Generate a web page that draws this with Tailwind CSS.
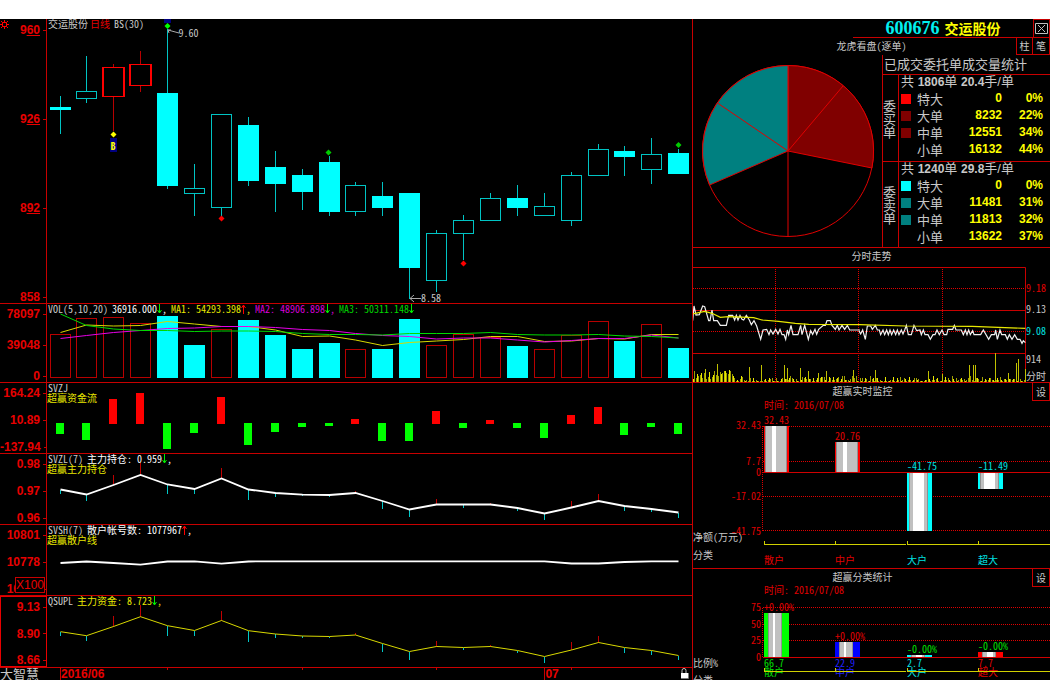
<!DOCTYPE html>
<html lang="zh-CN">
<head>
<meta charset="utf-8">
<title>600676 交运股份</title>
<script src="https://cdn.jsdelivr.net/npm/@tailwindcss/browser@4"></script>
</head>
<body class="bg-white pt-[19px] font-['Noto_Sans_CJK_SC',sans-serif] text-[10px] leading-[10px] text-[#c8c8c8] [font-feature-settings:'hwid'_1]">
<main class="grid grid-cols-[minmax(0,692fr)_minmax(0,358fr)] overflow-hidden bg-black">

<div class="flex flex-col">
  <section class="flex h-[285px] border-b border-[#c80000]">
    <div class="relative flex w-[47px] shrink-0 flex-col justify-between border-r border-[#c80000] pt-[5px] font-['Liberation_Sans'] text-[12px] leading-3 font-bold text-[#e80000]">
      <button aria-label="设置" class="absolute top-[1px] left-0"><svg class="size-[9px]" viewBox="0 0 9 9" fill="none" stroke="#f00"><path d="M2.500 2.500h4v4h-4zM4.500 0v2M4.500 7v2M0 4.500h2M7 4.500h2M1 1l1.500 1.500M6.500 6.500L8 8M8 1L6.500 2.500M1 8l1.500-1.500"/></svg></button>
      <div class="flex items-center justify-end gap-[3px]"><span>9<u>60</u></span><i class="h-px w-[3px] bg-[#c80000]"></i></div>
      <div class="flex items-center justify-end gap-[3px]"><span>9<u>26</u></span><i class="h-px w-[3px] bg-[#c80000]"></i></div>
      <div class="flex items-center justify-end gap-[3px]"><span>8<u>92</u></span><i class="h-px w-[3px] bg-[#c80000]"></i></div>
      <div class="flex items-center justify-end gap-[3px]"><span>858</span><i class="h-px w-[3px] bg-[#c80000]"></i></div>
    </div>
    <div class="relative min-w-0 flex-1">
      <svg id="price" class="h-[284px] w-full" viewBox="47 19 645 284" preserveAspectRatio="none"></svg>
      <div class="absolute top-0 left-px flex gap-[2px]"><span>交运股份</span><span class="text-[#e80000]">日线</span><span class="pl-[2px]">BS(30)</span></div>
      <span class="absolute top-[9px] left-[20.4%]">9.60</span>
      <span class="absolute top-[274px] left-[58%]">8.58</span>
      <span class="absolute top-[119px] left-[9.7%] h-[14px] bg-[#000080] px-px pt-[3px] font-bold text-[#ffff00]">B</span>
    </div>
  </section>

  <section class="flex h-[79px] border-b border-[#c80000]">
    <div class="flex w-[47px] shrink-0 flex-col justify-between border-r border-[#c80000] pt-1 font-['Liberation_Sans'] text-[12px] leading-3 font-bold text-[#e80000]">
      <div class="flex items-center justify-end gap-[3px]"><span>78097</span><i class="h-px w-[3px] bg-[#c80000]"></i></div>
      <div class="flex items-center justify-end gap-[3px]"><span>39048</span><i class="h-px w-[3px] bg-[#c80000]"></i></div>
      <div class="flex items-center justify-end gap-[3px]"><span>0</span><i class="h-px w-[3px] bg-[#c80000]"></i></div>
    </div>
    <div class="relative min-w-0 flex-1">
      <svg id="volume" class="h-[78px] w-full" viewBox="47 304 645 78" preserveAspectRatio="none"></svg>
      <div class="absolute top-0 left-px flex gap-1 whitespace-nowrap">
        <span>VOL(5,10,20)</span>
        <span class="flex text-white">36916.000<svg class="h-[10px] w-[5px]" viewBox="0 0 5 10" stroke="#0e0" fill="none"><path d="M2.5 0v9M.5 6l2 3 2-3"/></svg>,</span>
        <span class="flex text-[#e8e800]">MA1: 54293.398<svg class="h-[10px] w-[5px]" viewBox="0 0 5 10" stroke="#f00" fill="none"><path d="M2.5 10V1M.5 4l2-3 2 3"/></svg>,</span>
        <span class="flex text-[#d800d8]">MA2: 48906.898<svg class="h-[10px] w-[5px]" viewBox="0 0 5 10" stroke="#0e0" fill="none"><path d="M2.5 0v9M.5 6l2 3 2-3"/></svg>,</span>
        <span class="flex text-[#00d800]">MA3: 50311.148<svg class="h-[10px] w-[5px]" viewBox="0 0 5 10" stroke="#0e0" fill="none"><path d="M2.5 0v9M.5 6l2 3 2-3"/></svg></span>
      </div>
    </div>
  </section>

  <section class="flex h-[71px] border-b border-[#c80000]">
    <div class="flex w-[47px] shrink-0 flex-col justify-between border-r border-[#c80000] pt-1 font-['Liberation_Sans'] text-[12px] leading-3 font-bold text-[#e80000]">
      <div class="flex items-center justify-end gap-[3px]"><span>164.24</span><i class="h-px w-[3px] bg-[#c80000]"></i></div>
      <div class="flex items-center justify-end gap-[3px]"><span>10.89</span><i class="h-px w-[3px] bg-[#c80000]"></i></div>
      <div class="flex items-center justify-end gap-[3px]"><span>-137.94</span><i class="h-px w-[3px] bg-[#c80000]"></i></div>
    </div>
    <div class="relative min-w-0 flex-1">
      <svg id="flow" class="h-[70px] w-full" viewBox="47 383 645 70" preserveAspectRatio="none"></svg>
      <div class="absolute top-0 left-0"><p class="pl-px">SVZJ</p><p class="text-[#e8e800]">超赢资金流</p></div>
    </div>
  </section>

  <section class="flex h-[71px] border-b border-[#c80000]">
    <div class="flex w-[47px] shrink-0 flex-col justify-between border-r border-[#c80000] pt-1 font-['Liberation_Sans'] text-[12px] leading-3 font-bold text-[#e80000]">
      <div class="flex items-center justify-end gap-[3px]"><span>0.98</span><i class="h-px w-[3px] bg-[#c80000]"></i></div>
      <div class="flex items-center justify-end gap-[3px]"><span>0.97</span><i class="h-px w-[3px] bg-[#c80000]"></i></div>
      <div class="flex items-center justify-end gap-[3px]"><span>0.96</span><i class="h-px w-[3px] bg-[#c80000]"></i></div>
    </div>
    <div class="relative min-w-0 flex-1">
      <svg id="holding" class="h-[70px] w-full" viewBox="47 454 645 70" preserveAspectRatio="none"></svg>
      <div class="absolute top-0 left-0"><p class="flex gap-1 pl-px">SVZL(7) <span class="flex text-white">主力持仓: 0.959<svg class="h-[10px] w-[5px]" viewBox="0 0 5 10" stroke="#0e0" fill="none"><path d="M2.5 0v9M.5 6l2 3 2-3"/></svg>,</span></p><p class="text-[#e8e800]">超赢主力持仓</p></div>
    </div>
  </section>

  <section class="flex h-[71px] border-b border-[#c80000]">
    <div class="relative flex w-[47px] shrink-0 flex-col justify-between border-r border-[#c80000] pt-1 font-['Liberation_Sans'] text-[12px] leading-3 font-bold text-[#e80000]">
      <div class="flex items-center justify-end gap-[3px]"><span>10801</span><i class="h-px w-[3px] bg-[#c80000]"></i></div>
      <div class="flex items-center justify-end gap-[3px]"><span>10778</span><i class="h-px w-[3px] bg-[#c80000]"></i></div>
      <div class="flex items-center justify-end gap-[3px]"><span>10755</span><i class="h-px w-[3px] bg-[#c80000]"></i></div>
      <span class="absolute right-px bottom-[2px] border border-[#c80000] bg-black py-px font-normal">X100</span>
    </div>
    <div class="relative min-w-0 flex-1">
      <svg id="retail" class="h-[70px] w-full" viewBox="47 525 645 70" preserveAspectRatio="none"></svg>
      <div class="absolute top-0 left-0"><p class="flex gap-1 pl-px">SVSH(7) <span class="flex text-white">散户帐号数: 1077967<svg class="h-[10px] w-[5px]" viewBox="0 0 5 10" stroke="#f00" fill="none"><path d="M2.5 10V1M.5 4l2-3 2 3"/></svg>,</span></p><p class="text-[#e8e800]">超赢散户线</p></div>
    </div>
  </section>

  <section class="flex h-[72px] border-b border-[#c80000]">
    <div class="flex w-[47px] shrink-0 flex-col justify-between border border-[#e80000] pt-1 font-['Liberation_Sans'] text-[12px] leading-3 font-bold text-[#e80000]">
      <div class="flex items-center justify-end gap-[3px]"><span>9.13</span><i class="h-px w-[3px] bg-[#c80000]"></i></div>
      <div class="flex items-center justify-end gap-[3px]"><span>8.90</span><i class="h-px w-[3px] bg-[#c80000]"></i></div>
      <div class="flex items-center justify-end gap-[3px]"><span>8.66</span><i class="h-px w-[3px] bg-[#c80000]"></i></div>
    </div>
    <div class="relative min-w-0 flex-1">
      <svg id="funds" class="h-[71px] w-full" viewBox="47 596 645 71" preserveAspectRatio="none"></svg>
      <p class="absolute top-0 left-px flex gap-1">QSUPL <span class="flex text-[#e8e800]">主力资金: 8.723<svg class="h-[10px] w-[5px]" viewBox="0 0 5 10" stroke="#0e0" fill="none"><path d="M2.5 0v9M.5 6l2 3 2-3"/></svg>,</span></p>
    </div>
  </section>

  <footer class="flex h-[12px] leading-3">
    <span class="w-[60px] shrink-0 text-[13px]">大智慧</span>
    <div class="relative flex-1 font-['Liberation_Sans'] text-[12px] font-bold text-[#e80000]">
      <svg class="h-3 w-full" viewBox="60 668 632 12" preserveAspectRatio="none" stroke="#c80000" shape-rendering="crispEdges"><path d="M60.5 668v12M544.5 668v12M86.5 668v2M167.5 668v2M302.5 668v2M436.5 668v2M571.5 668v2"/></svg>
      <span class="absolute top-0 left-px">2016/06</span><span class="absolute top-0 left-[76.8%]">07</span>
      <svg class="absolute top-0 right-[3px] h-[11px] w-[9px]" viewBox="0 0 9 11"><path d="M2 5V2.500Q2 .5 4 .5T6 2.500V5" fill="none" stroke="#c0c0c0"/><path d="M1 5h7v5H1z" fill="#fff"/><path d="M8.500 5v5.500H1" fill="none" stroke="#777"/></svg>
    </div>
  </footer>
</div>

<div class="flex flex-col border-l border-[#c80000]">
  <section class="border-b border-[#c80000]">
    <header class="flex h-[19px]">
      <div class="w-[160px] shrink-0"></div>
      <h1 class="flex flex-1 items-center justify-center gap-[5px] border-b border-[#c80000] text-[14px] leading-[18px] font-bold text-[#ffff00]"><span class="font-['Liberation_Serif'] text-[18px] text-[#00f0f0]">600676</span>交运股份</h1>
      <button aria-label="关闭" class="flex w-[17px] items-center justify-center border border-[#c80000]"><svg class="size-[13px]" viewBox="0 0 13 13" fill="none" stroke="#c0c0c0"><path d="M.5 1.500h12v10H.5zM3 3l7 7M10 3l-7 7"/></svg></button>
    </header>
    <div class="flex h-[17px]">
      <div class="w-[34px]"></div>
      <h2 class="flex-1 pt-[3px] text-center">龙虎看盘(逐单)</h2>
      <button class="w-[17px] border border-t-0 border-[#c80000]">柱</button><button class="w-[17px] border border-t-0 border-l-0 border-[#c80000]">笔</button>
    </div>
    <div class="flex h-[192px]">
      <svg class="h-[192px] w-[189px] shrink-0" viewBox="693 55 189 192" stroke="#e00000">
        <circle cx="788" cy="151" r="85.500" fill="#000"/>
        <path d="M788 151V65.500A85.500 85.500 0 0 1 871.900 168Z" fill="#800000"/>
        <path d="M788 151L709.600 185A85.500 85.500 0 0 1 788 65.500Z" fill="#008080"/>
        <path d="M788 151L843 86M788 151L717.500 103M788 151V236.500" fill="none"/>
      </svg>
      <div class="flex-1 border-l border-[#c80000] text-[13px]">
        <h3 class="h-[19px] pl-px leading-[17px] whitespace-nowrap">已成交委托单成交量统计</h3>
        <div class="flex h-[87px] border-t border-[#c80000]">
          <div class="flex w-[16px] flex-col justify-center border-r border-[#c80000] leading-[13px]"><span>委</span><span>买</span><span>单</span></div>
          <div class="flex-1">
          <table class="w-full [&_td]:h-[17px] [&_td]:p-0 [&_td]:align-middle">
            <caption class="h-[15px] pl-[2px] text-left font-['Liberation_Sans','Noto_Sans_CJK_SC'] leading-[14px] whitespace-nowrap">共 <b class="text-[12px]">1806</b>单 <b class="text-[12px]">20.4</b>手/单</caption>
            <tbody class="leading-[15px]">
            <tr><td class="w-[18px]"><i class="ml-[2px] block size-[10px] bg-[#ff0000]"></i></td><td class="w-[28px]">特大</td><td class="text-right font-['Liberation_Sans'] text-[12px] font-bold text-[#ffff00]">0</td><td class="w-[41px] text-right font-['Liberation_Sans'] text-[12px] font-bold text-[#ffff00]">0%</td><td class="w-[7px]"></td></tr>
            <tr><td><i class="ml-[2px] block size-[10px] bg-[#800000]"></i></td><td>大单</td><td class="text-right font-['Liberation_Sans'] text-[12px] font-bold text-[#ffff00]">8232</td><td class="text-right font-['Liberation_Sans'] text-[12px] font-bold text-[#ffff00]">22%</td><td></td></tr>
            <tr><td><i class="ml-[2px] block size-[10px] bg-[#800000]"></i></td><td>中单</td><td class="text-right font-['Liberation_Sans'] text-[12px] font-bold text-[#ffff00]">12551</td><td class="text-right font-['Liberation_Sans'] text-[12px] font-bold text-[#ffff00]">34%</td><td></td></tr>
            <tr><td></td><td>小单</td><td class="text-right font-['Liberation_Sans'] text-[12px] font-bold text-[#ffff00]">16132</td><td class="text-right font-['Liberation_Sans'] text-[12px] font-bold text-[#ffff00]">44%</td><td></td></tr>
            </tbody>
          </table>
          </div>
        </div>
        <div class="flex h-[86px] border-t border-[#c80000]">
          <div class="flex w-[16px] flex-col justify-center border-r border-[#c80000] leading-[13px]"><span>委</span><span>卖</span><span>单</span></div>
          <div class="flex-1">
          <table class="w-full [&_td]:h-[17px] [&_td]:p-0 [&_td]:align-middle">
            <caption class="h-[15px] pl-[2px] text-left font-['Liberation_Sans','Noto_Sans_CJK_SC'] leading-[14px] whitespace-nowrap">共 <b class="text-[12px]">1240</b>单 <b class="text-[12px]">29.8</b>手/单</caption>
            <tbody class="leading-[15px]">
            <tr><td class="w-[18px]"><i class="ml-[2px] block size-[10px] bg-[#00ffff]"></i></td><td class="w-[28px]">特大</td><td class="text-right font-['Liberation_Sans'] text-[12px] font-bold text-[#ffff00]">0</td><td class="w-[41px] text-right font-['Liberation_Sans'] text-[12px] font-bold text-[#ffff00]">0%</td><td class="w-[7px]"></td></tr>
            <tr><td><i class="ml-[2px] block size-[10px] bg-[#008080]"></i></td><td>大单</td><td class="text-right font-['Liberation_Sans'] text-[12px] font-bold text-[#ffff00]">11481</td><td class="text-right font-['Liberation_Sans'] text-[12px] font-bold text-[#ffff00]">31%</td><td></td></tr>
            <tr><td><i class="ml-[2px] block size-[10px] bg-[#008080]"></i></td><td>中单</td><td class="text-right font-['Liberation_Sans'] text-[12px] font-bold text-[#ffff00]">11813</td><td class="text-right font-['Liberation_Sans'] text-[12px] font-bold text-[#ffff00]">32%</td><td></td></tr>
            <tr><td></td><td>小单</td><td class="text-right font-['Liberation_Sans'] text-[12px] font-bold text-[#ffff00]">13622</td><td class="text-right font-['Liberation_Sans'] text-[12px] font-bold text-[#ffff00]">37%</td><td></td></tr>
            </tbody>
          </table>
          </div>
        </div>
      </div>
    </div>
  </section>

  <section class="h-[135px] border-b border-[#c80000]">
    <h2 class="h-[19px] pt-[3px] text-center">分时走势</h2>
    <div class="flex">
      <svg id="intraday" class="h-[115px] min-w-0 flex-1" viewBox="693 267 333 115" preserveAspectRatio="none"></svg>
      <div class="w-6 pt-4 whitespace-nowrap"><p class="text-[#e00000]">9.18</p><p class="pt-[11px]">9.13</p><p class="pt-[12px] text-[#00e0e0]">9.08</p><p class="pt-[18px]">914</p><p class="pt-[7px]">分时</p></div>
    </div>
  </section>

  <section class="h-[186px] border-b border-[#c80000]">
    <header class="flex h-[18px]"><h2 class="flex-1 pt-[3px] text-center">超赢实时监控</h2><button class="w-[18px] border border-t-0 border-[#c80000]">设</button></header>
    <svg id="monitor" class="h-[167px] w-full overflow-visible" viewBox="693 401 357 167" preserveAspectRatio="xMinYMin meet"></svg>
  </section>

  <section>
    <header class="flex h-[18px]"><h2 class="flex-1 pt-[3px] text-center">超赢分类统计</h2><button class="w-[18px] border border-t-0 border-[#c80000]">设</button></header>
    <svg id="classes" class="h-[93px] w-full overflow-visible" viewBox="693 587 357 93" preserveAspectRatio="xMinYMin meet"></svg>
  </section>
</div>
</main>

<script>
const put = (id, s) => { document.getElementById(id).innerHTML = s; };
const cx = i => Math.round(59.5 + 26.9 * i);
const rect = (x, y, w, h, f) => `<rect x="${x}" y="${y}" width="${w}" height="${h}" fill="${f}" shape-rendering="crispEdges"/>`;
const box = (x, y, w, h, c, sw = 1) => `<rect x="${x + .5}" y="${y + .5}" width="${w - 1}" height="${h - 1}" fill="none" stroke="${c}" stroke-width="${sw}"/>`;
const line = (p, c, w = 1) => `<polyline points="${p}" fill="none" stroke="${c}" stroke-width="${w}"/>`;
const series = (ys, c, w) => line(ys.map((y, i) => `${cx(i) + .5},${y}`).join(' '), c, w);
const diamond = (x, y, c) => `<path d="M${x - 3} ${y}L${x} ${y - 3}L${x + 3} ${y}L${x} ${y + 3}Z" fill="${c}"/>`;
const CY = '#00ffff', HC = '#00c4c4', RD = '#ff0000', DR = '#b80000';

// high, body top, body bottom, low, kind (f: filled, h: hollow, r: red)
const candles = [[96,107,110,134,'f'],[56,91,99,103,'h'],[64,67,97,131,'r'],[51,64,86,92,'r'],[29,93,186,189,'f'],[164,188,194,216,'h'],[114,114,208,216,'h'],[117,125,181,186,'f'],[151,167,184,212,'f'],[169,175,192,210,'f'],[156,162,212,216,'f'],[182,185,212,216,'h'],[182,196,208,216,'f'],[193,193,268,299,'f'],[230,233,281,292,'h'],[215,220,234,260,'h'],[193,198,221,221,'h'],[185,198,208,216,'f'],[193,206,216,216,'h'],[172,175,221,226,'h'],[144,149,176,176,'h'],[146,151,157,176,'f'],[138,154,170,184,'h'],[149,153,174,174,'f']];
put('price', candles.map(([h, t, b, l, k], i) => {
  const x = cx(i), c = k === 'r' ? RD : HC, w = k === 'r' ? DR : HC;
  let s = rect(x, h, 1, t - h, w) + rect(x, b, 1, l - b, w);
  if (k === 'f') return s + rect(x - 10, t, 21, b - t, CY);
  s += box(x - (k === 'r' ? 11 : 10), t, k === 'r' ? 23 : 21, b - t, c);
  if (k === 'r') s += rect(x - 11, t, 2, b - t, c) + rect(x + 10, t, 2, b - t, c);
  return s;
}).join('') + diamond(113.5, 134.5, '#ff0') + diamond(221.5, 218.5, RD) + diamond(463.5, 263.5, RD) + diamond(328.5, 152.5, '#0c0') + diamond(678.5, 145, '#0c0') +
  rect(164, 19, 7, 4, '#000080') + diamond(167.5, 26, '#0f0') + line('171,30 168,30 169,33', '#aaa') + line('168,30 179,33', '#aaa') + line('414,295 410,298.5 414,302', '#aaa') + line('410,298.5 421,298.5', '#aaa'));

const vol = [[334,0],[318,0],[317,0],[323,0],[316,1],[345,1],[329,0],[320,1],[335,1],[349,1],[343,1],[349,0],[349,1],[319,1],[345,0],[334,0],[337,0],[346,1],[349,0],[335,0],[321,0],[341,1],[324,0],[348,1]];
put('volume', vol.map(([t, f], i) => f ? rect(cx(i) - 10, t, 21, 378 - t, CY) : box(cx(i) - 10, t, 21, 378 - t, DR)).join('') +
  series([332.5,325,326,325.5,321.5,324,326.5,326.5,330,336.5,336,340,345.5,342.5,341,339.5,336.5,336.5,341.5,341,338.5,339,334.5,334.5], '#d8d800') +
  series([338.5,335.5,332.5,330.5,328.5,328,326.5,326.5,327.5,329.5,330.5,333.5,335.5,336.5,339,338,338,340,342,340.5,338.5,338.5,335,338], '#e800e8') +
  series([314,325.5,329,330.5,330.5,331.5,331,331,331.5,333.5,334.5,334.5,335,333.5,333.5,333.5,332.5,334.5,335,335,334.5,336,336.5,338], '#00d800'));

put('flow', [434,440,399,393,449,433,397,445,432,427,426,419,441,441,411,428,420,428,438,415,407,435,427,434].map((y, i) => y > 423 ? rect(cx(i) - 4, 423, 8, y - 423, '#0f0') : rect(cx(i) - 4, y, 8, (i === 11 || i === 16 ? 424 : 424) - y, RD)).join(''));

const ticks = (ys, ends) => ys.map((y, i) => rect(cx(i), Math.min(y, ends[i]), 1, Math.abs(ends[i] - y), ends[i] > y ? '#00c8c8' : '#c00000')).join('');
const hold = [489.5,494.5,485,475,484.5,489,478.5,489.5,493,494.7,495,493,501,509.5,504.5,504.5,504.5,508,513.5,507.5,501,506,509,512.5];
put('holding', ticks(hold, [494,501,475,463,494,494,468,500,497,496,496.5,491,509,517,499,508,503,511,520,501,494,511,512,518]) + series(hold, '#fff', 1.8));
put('retail', series([563,561.5,563,564.7,561.5,561.3,563.7,561.5,561.3,561.3,561.3,561.3,561.3,561.3,561.3,561.3,561.3,561.3,561.3,563.5,563.5,562,561.3,561.3], '#fff', 1.8));
const funds = [631.7,635.7,626.5,616.7,625.7,630.5,620.5,630.7,634,636,636.5,635,643.5,651.5,646.5,647.5,646.5,650.5,656.5,650,642.5,647.5,650.5,655.5];
put('funds', ticks(funds, [636,641,616,605,636,636,611,642,638,638,638,633,652,660,640.5,650,645,653,663,642,635.5,653,655,660]) + series(funds, '#d8d800'));

// intraday prices: three units to a pixel, relative to each half's origin
const px = (a, ox, oy) => a.map(([x, y]) => `${ox + x / 3},${oy + y / 3}`).join(' ');
const left = [[2,62],[6,18],[12,45],[22,44],[32,18],[38,20],[50,62],[54,62],[60,30],[65,62],[76,62],[85,76],[103,76],[110,46],[122,46],[128,60],[133,46],[138,60],[144,46],[150,58],[155,60],[163,46],[172,60],[178,74],[186,62],[194,78],[206,118],[213,90],[224,88],[231,104],[236,90],[243,102],[251,88],[258,102],[264,88],[270,104],[276,104],[281,118],[286,90],[290,104],[297,76],[303,104],[318,104],[326,76],[330,104],[338,76],[349,118],[356,92],[362,103],[369,88],[374,103],[380,88],[394,76],[400,76],[405,62],[415,62],[420,76],[430,88],[436,76],[441,90],[450,76],[458,88],[466,76],[473,90],[504,90]];
const right = [[3,92],[8,102],[14,90],[22,118],[28,78],[38,78],[43,88],[52,76],[58,90],[64,90],[68,104],[75,90],[80,104],[86,90],[91,104],[96,90],[101,104],[107,90],[113,104],[118,90],[123,104],[130,90],[135,102],[140,90],[145,76],[151,104],[160,104],[168,76],[176,92],[186,90],[190,104],[196,90],[201,104],[210,104],[217,118],[225,104],[231,104],[237,90],[244,104],[252,90],[258,104],[266,104],[270,88],[284,88],[289,76],[294,90],[310,90],[316,104],[322,90],[327,104],[332,90],[337,104],[344,92],[348,104],[368,104],[376,90],[392,118],[400,104],[410,104],[413,90],[418,118],[426,90],[431,104],[442,104],[448,118],[454,104],[462,118],[470,104],[478,118],[486,118],[492,130],[496,122],[502,128]];
const avg = [[2,42],[38,34],[60,40],[85,52],[110,50],[185,53],[210,60],[260,64],[310,70],[350,73],[504,74],[640,78],[840,79],[1000,85]];
let bars = '';
for (let k = 0; k < 250; k++) {
  const r = Math.abs(Math.sin(k * 12.9898) * 43758.5453) % 1;
  const h = Math.round(k < 30 ? 3 + r * 9 : 1 + r * r * 5);
  bars += rect(693 + Math.round(k * 1.333), 382 - h, 1, h, k % 3 ? '#a0a000' : '#e8e800');
}
[[45,38],[82,55],[103,33],[178,45],[213,50],[283,52],[292,42],[330,42],[355,32],[385,28],[409,34],[490,37],[556,37],[714,32],[757,25],[838,50],[851,50],[856,50],[917,86],[955,28],[979,57],[985,68],[1005,38]].forEach(([x, h]) => { bars += rect(Math.round(689.5 + x / 3), 382 - Math.round(h / 3), 1, Math.round(h / 3), '#c0c000'); });
put('intraday', '<path d="M693 288.500H1025M693 331.500H1025M775.500 267V382M858.500 267V382M942.500 267V382" stroke="#e00000" stroke-dasharray="1 1" shape-rendering="crispEdges" fill="none"/><path d="M693 267.500H1025.500V382M693 310.500H1025M693 353.500H1025" stroke="#c80000" fill="none"/>' + bars + line(px(left, 692, 300), '#f0f0f0', 1.2) + line(px(right, 858, 300), '#f0f0f0', 1.2) + line(px(avg, 692, 300), '#e8e800', 1.2));

const text = (x, y, s, c, a = 'start') => `<text x="${x}" y="${y}" fill="${c}" text-anchor="${a}" font-size="10">${s}</text>`;
const dots = (y) => `<path d="M763 ${y + .5}H1050" stroke="#e00000" stroke-dasharray="1 1" shape-rendering="crispEdges"/>`;
const yaxis = y => `<path d="${[764, 835, 907, 978].map(x => `M${x + .5} ${y - 3}V${y}`).join('')}M764 ${y + .5}H906M907 ${y + .5}H1050" stroke="#d0d000" fill="none"/>`;
const cyl = (x, y, h, c, l, r, ws, ww) => rect(x, y, 25, h, c) + rect(x + l, y, 25 - l - r, h, '#909090') + rect(x + l + 1, y, 23 - l - r, h, '#c0c0c0') + rect(x + ws, y, ww, h, '#fff');
const R = '#e00000', C = '#00e0e0', G = '#c8c8c8';
put('monitor', dots(426) + dots(461) + dots(496) + dots(530) + '<path d="M762.500 426V531" stroke="#e00000" stroke-dasharray="1 1" shape-rendering="crispEdges"/>' +
  cyl(764, 426, 46, RD, 1, 2, 8, 4) + cyl(835, 442, 30, RD, 1, 2, 8, 4) + cyl(907, 472, 59, CY, 2, 4, 6, 11) + cyl(978, 472, 17, CY, 2, 4, 6, 11) +
  rect(763, 472, 287, 1, '#d00000') + yaxis(544) +
  text(764, 409, '时间: 2016/07/08', R) + text(764, 424, '32.43', R) + text(835, 440, '20.76', R) + text(907, 470, '-41.75', C) + text(978, 470, '-11.49', C) +
  text(761, 429, '32.43', R, 'end') + text(761, 465, '7.7', R, 'end') + text(761, 476, '0', R, 'end') + text(761, 500, '-17.02', R, 'end') + text(761, 535, '-41.75', R, 'end') +
  text(693, 541, '净额(万元)', G) + text(693, 559, '分类', G) + text(764, 564, '散户', R) + text(835, 564, '中户', R) + text(907, 564, '大户', C) + text(978, 564, '超大', C));
put('classes', dots(607) + dots(624) + dots(640) + '<path d="M762.500 608V657" stroke="#e00000" stroke-dasharray="1 1" shape-rendering="crispEdges"/>' +
  cyl(764, 613, 44, '#0f0', 4, 7, 9, 2) + cyl(835, 642, 15, '#00f', 4, 7, 9, 2) + cyl(907, 655, 2, CY, 4, 7, 9, 6) + cyl(978, 652, 5, RD, 4, 7, 9, 6) +
  rect(763, 657, 287, 1, '#d00000') +
  text(764, 594, '时间: 2016/07/08', R) + text(764, 611, '+0.00%', R) + text(835, 640, '+0.00%', R) + text(907, 653, '-0.00%', '#00e000') + text(978, 650, '-0.00%', '#00e000') +
  text(761, 611, '75', R, 'end') + text(761, 628, '50', R, 'end') + text(761, 644, '25', R, 'end') + text(761, 661, '0', R, 'end') +
  text(764, 667, '66.7', '#00e000') + text(835, 667, '22.9', '#2020ff') + text(907, 667, '2.7', C) + text(978, 667, '7.7', R) +
  text(693, 667, '比例%', G) + text(693, 684, '分类', G) + text(764, 676, '散户', '#00e000') + text(835, 676, '中户', '#2020ff') + text(907, 676, '大户', C) + text(978, 676, '超大', R) + yaxis(671));
</script>
</body>
</html>
